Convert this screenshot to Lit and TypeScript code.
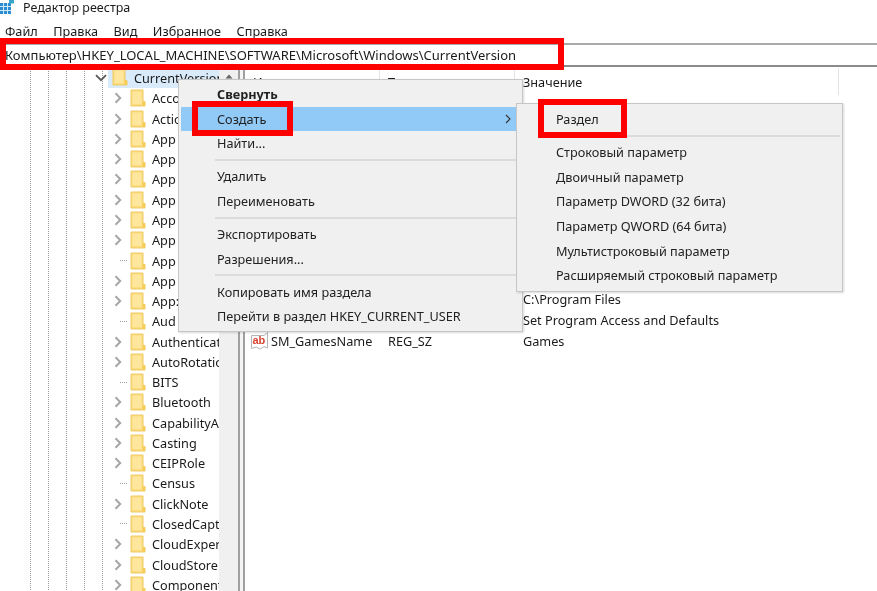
import { LitElement, html, css, svg } from "lit";
import { customElement } from "lit/decorators.js";

const treeRows: [string, number][] = [
  ["Acco", 1], ["Actio", 1], ["App", 1], ["App", 1], ["App", 1], ["App", 1], ["App", 1], ["App", 1],
  ["App", 0], ["App", 1], ["App:", 1], ["Aud", 0], ["Authentication", 1], ["AutoRotation", 1], ["BITS", 0],
  ["Bluetooth", 1], ["CapabilityAccess", 1], ["Casting", 1], ["CEIPRole", 1], ["Census", 0], ["ClickNote", 1],
  ["ClosedCaptioning", 0], ["CloudExperience", 1], ["CloudStore", 1], ["Components", 1],
];

const folder = svg`<svg class="folder" viewBox="0 0 16 18" width="16" height="18">
  <path d="M1 1H13V12.5L15 12.5V17H1Z" fill="#fcdc7c" stroke="#eec964"/>
  <path d="M2.5 2.5H11.5V15H2.5Z" fill="#fee69c"/>
  <path d="M12.5 12.5L15 12.5V17H12.5Z" fill="#f6cc55"/>
</svg>`;

const chevron = svg`<svg class="chev" viewBox="0 0 8 12" width="8" height="12"><path d="M1.5 1.2L6.2 6L1.5 10.8" fill="none" stroke="#a6a6a6" stroke-width="2"/></svg>`;

const mainMenu = [
  [["Свернуть", "bold"], ["Создать", "hi"], ["Найти...", ""]],
  [["Удалить", ""], ["Переименовать", ""]],
  [["Экспортировать", ""], ["Разрешения...", ""]],
  [["Копировать имя раздела", ""], ["Перейти в раздел HKEY_CURRENT_USER", ""]],
];

const subMenu = [
  ["Раздел"],
  ["Строковый параметр", "Двоичный параметр", "Параметр DWORD (32 бита)", "Параметр QWORD (64 бита)", "Мультистроковый параметр", "Расширяемый строковый параметр"],
];

const values: [string, string, string][] = [
  ["(По умолчанию)", "REG_SZ", "(значение не присвоено)"],
  ["CommonFilesDir", "REG_SZ", "C:\\Program Files\\Common Files"],
  ["CommonFilesDir (x86)", "REG_SZ", "C:\\Program Files (x86)\\Common Files"],
  ["CommonW6432Dir", "REG_SZ", "C:\\Program Files\\Common Files"],
  ["DevicePath", "REG_EXPAND_SZ", "%SystemRoot%\\inf"],
  ["MediaPathUnexpanded", "REG_EXPAND_SZ", "%SystemRoot%\\Media"],
  ["ProgramFilesDir", "REG_SZ", "C:\\Program Files"],
  ["ProgramFilesDir (x86)", "REG_SZ", "C:\\Program Files (x86)"],
  ["ProgramFilesPath", "REG_EXPAND_SZ", "%ProgramFiles%"],
  ["ProgramW6432Dir", "REG_SZ", "C:\\Program Files"],
  ["SM_ConfigureProgramsName", "REG_SZ", "Set Program Access and Defaults"],
  ["SM_GamesName", "REG_SZ", "Games"],
];

@customElement("app-root")
export class AppRoot extends LitElement {
  static styles = css`
    :host { display: block; width: 877px; height: 591px; position: relative; overflow: hidden; background: #fff; color: #1a1a1a; font-family: "Noto Sans", sans-serif; font-size: 12.7px; }
    .app { filter: blur(0.4px); height: 591px; display: flex; flex-direction: column; }
    .title { height: 15px; display: flex; align-items: center; gap: 9px; overflow: hidden; flex: none; font-size: 12.5px; }
    .menu { height: 27px; display: flex; align-items: center; padding: 4px 0 0 5px; box-sizing: border-box; flex: none; gap: 15.5px; }
    .address { margin-top: 1px; height: 24px; flex: none; border-top: 2px solid #a9a9a9; border-bottom: 2px solid #8a8a8a; box-sizing: border-box; display: flex; align-items: center; padding-left: 5px; white-space: nowrap; font-size: 13px; }
    .body { flex: 1; display: flex; min-height: 0; }
    .tree { width: 219px; flex: none; position: relative; overflow: hidden; padding-top: 1px; box-sizing: border-box; }
    .guide { position: absolute; top: 0; bottom: 0; width: 1px; background: repeating-linear-gradient(#9a9a9a 0 1px, transparent 1px 2px); }
    .row { height: 20.28px; display: flex; align-items: center; white-space: nowrap; position: relative; }
    .row.sel { background: linear-gradient(90deg, transparent 108px, #d9ebfb 108px); }
    .down { margin-left: 95px; flex: none; }
    .sel .folder { margin-left: 5px; margin-top: -2px; }
    .twisty { width: 8px; height: 12px; margin-left: 114px; flex: none; display: flex; }
    .leaf-dots { height: 1px; margin-left: 120px; width: 8px; flex: none; background: repeating-linear-gradient(90deg, #9a9a9a 0 1px, transparent 1px 2px); }
    .chev { display: block; }
    .folder { margin-left: 8px; flex: none; }
    .leaf-dots + .folder { margin-left: 2px; }
    .label { margin-left: 6px; }
    .gutter { width: 19px; flex: none; background: #f0f0f0; display: flex; justify-content: center; padding-top: 7px; box-sizing: border-box; }
    .up { display: block; }
    .split { width: 7px; flex: none; border-left: 2px solid #a0a0a0; border-right: 2px solid #a0a0a0; box-sizing: border-box; background: #f4f4f4; }
    .pane { flex: 1; min-width: 0; position: relative; }
    .head { height: 29px; display: grid; grid-template-columns: 135px 135px 324px; align-items: center; }
    .head span { padding-left: 8px; height: 27px; display: flex; align-items: center; box-sizing: border-box; border-right: 1px solid #e3e3e3; }
    .val { height: 21.33px; display: grid; grid-template-columns: 20px 117px 135px 1fr; align-items: center; white-space: nowrap; padding-left: 6px; }
    .ab { display: block; }
    .popup { position: absolute; background: #f0f0f0; border: 1px solid #c6c6c6; box-shadow: 1px 1px 2px rgba(0,0,0,.15); box-sizing: border-box; color: #222; filter: blur(0.4px); }
    .main { left: 178px; top: 79px; width: 345px; height: 253px; padding: 2px 2px; }
    .sub { left: 516px; top: 103px; width: 327px; height: 189px; padding: 3px 2px; }
    .item { height: 24.6px; display: flex; align-items: center; padding-left: 36px; position: relative; white-space: nowrap; }
    .sub .item { padding-left: 37px; }
    .item.bold { font-weight: 700; }
    .item.hi { background: #91c9f7; }
    .sep { height: 2px; background: #dcdcdc; margin: 3.2px 0 3.2px 34px; }
    .arrow { position: absolute; right: 9px; top: 7px; }
    .red { position: absolute; border: 6.5px solid #fe0000; box-sizing: border-box; }
    .r1 { left: 0; top: 38px; width: 564px; height: 32px; }
    .r2 { left: 192px; top: 101px; width: 101px; height: 35px; }
    .r3 { left: 538px; top: 99px; width: 89px; height: 39px; }
  `;

  render() {
    return html`
      <div class="app">
        <div class="title">
          <svg width="14" height="15" viewBox="0 0 14 15" style="flex:none">
            <path d="M0 3H11V14H0Z" fill="#2a8bd0"/>
            <path d="M0 6.5H11M0 10.5H11M3.5 3V14M7.5 3V14" stroke="#cfe9f7" stroke-width="1"/>
            <path d="M9 0H14V3.5H9Z" fill="#3aa5c8"/>
          </svg>
          <span>Редактор реестра</span>
        </div>
        <div class="menu"><span>Файл</span><span>Правка</span><span>Вид</span><span>Избранное</span><span>Справка</span></div>
        <div class="address">Компьютер\\HKEY_LOCAL_MACHINE\\SOFTWARE\\Microsoft\\Windows\\CurrentVersion</div>
        <div class="body">
          <div class="tree">
            ${[30, 48, 66, 84, 102].map((x) => html`<div class="guide" style="left:${x}px"></div>`)}
            <div class="row sel">
              <svg class="down" width="12" height="8" viewBox="0 0 12 8"><path d="M1 1.2L6 6.2L11 1.2" fill="none" stroke="#5a5a5a" stroke-width="1.8"/></svg>
              ${folder}<span class="label">CurrentVersion</span>
            </div>
            ${treeRows.map(([n, exp]) => html`<div class="row">
              ${exp ? html`<span class="twisty">${chevron}</span>` : html`<span class="leaf-dots"></span>`}
              ${folder}<span class="label">${n}</span>
            </div>`)}
          </div>
          <div class="gutter"><svg class="up" width="8" height="5" viewBox="0 0 8 5"><path d="M4 0.5L7.5 4.5H0.5Z" fill="#666"/></svg></div>
          <div class="split"></div>
          <div class="pane">
            <div class="head"><span>Имя</span><span>Тип</span><span>Значение</span></div>
            <div class="vals">
              ${values.map(([a, b, c]) => html`<div class="val">
                <svg class="ab" width="18" height="18" viewBox="0 0 18 18">
                  <path d="M0.5 3.5H13L16.5 0.5V16L13 14.5L9 17L5 15L0.5 16.5Z" fill="#fff" stroke="#b5b5b5"/>
                  <text x="1.5" y="12" font-family="Liberation Sans, sans-serif" font-size="11" font-weight="700" fill="#d8422f">ab</text>
                </svg>
                <span>${a}</span><span>${b}</span><span>${c}</span>
              </div>`)}
            </div>
          </div>
        </div>
      </div>
      <div class="popup main">
        ${mainMenu.map((g, i) => html`${i ? html`<div class="sep"></div>` : ""}${g.map(([t, c]) => html`<div class="item ${c}">${t}${c === "hi" ? html`<svg class="arrow" width="6" height="10" viewBox="0 0 6 10"><path d="M1 1L5 5L1 9" fill="none" stroke="#333" stroke-width="1.1"/></svg>` : ""}</div>`)}`)}
      </div>
      <div class="popup sub">
        ${subMenu.map((g, i) => html`${i ? html`<div class="sep"></div>` : ""}${g.map((t) => html`<div class="item">${t}</div>`)}`)}
      </div>
      <div class="red r1"></div>
      <div class="red r2"></div>
      <div class="red r3"></div>
    `;
  }
}
